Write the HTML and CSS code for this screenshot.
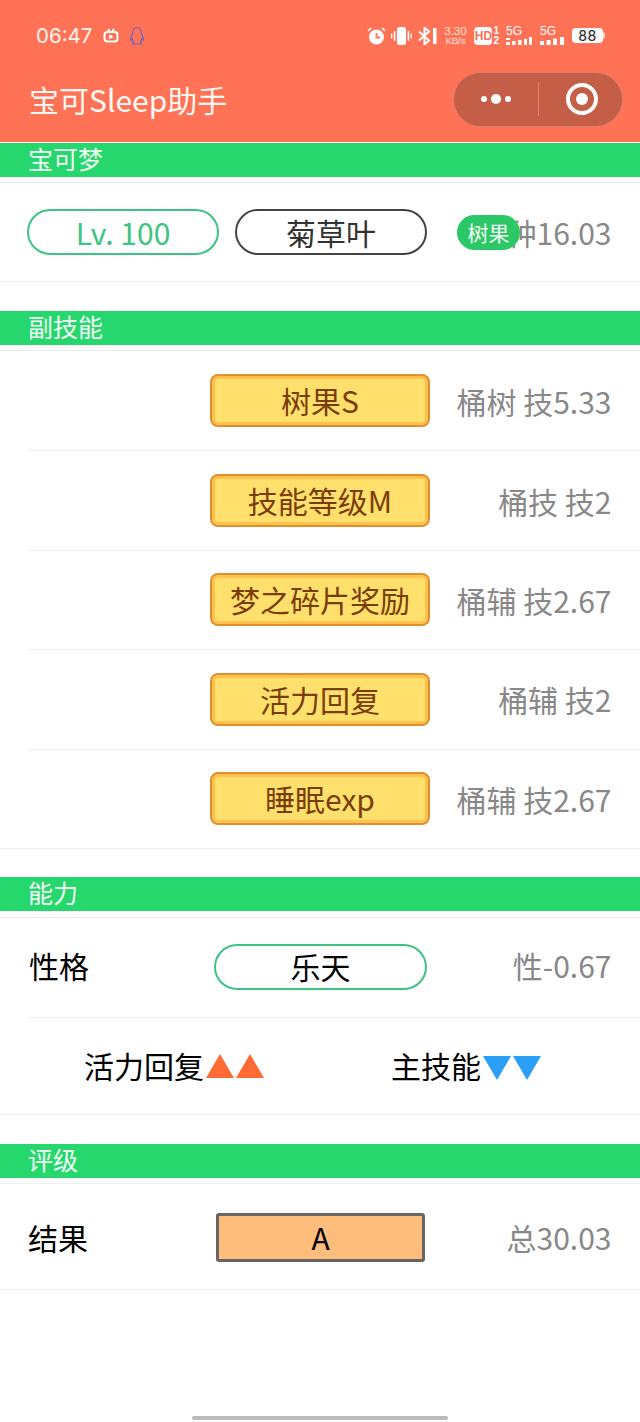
FILE: index.html
```html
<!DOCTYPE html>
<html lang="zh-CN">
<head>
  <meta charset="UTF-8">
  <title>宝可Sleep助手</title>
  <link rel="stylesheet" href="styles.css">
</head>
<body>
  <header class="topbar">
    <div class="status">
      <div class="status-left">
        <span class="time">06:47</span>
        <svg class="ic-tv" width="16" height="15" viewBox="0 0 16 15" fill="none" stroke="#fff" stroke-width="2"><path d="M5 1l2 3M11 1L9 4"/><rect x="1.5" y="4" width="13" height="9.5" rx="3"/><path d="M6.5 7v3.5l3.5-1.7z" fill="#fff" stroke-width="1"/></svg>
        <svg class="ic-qq" width="16" height="20" viewBox="0 0 17 20" fill="none" stroke="#5b63c9" stroke-width="1.1"><path d="M8.5 1C5.5 1 4 3.2 4 6c0 1.2-.3 1.800-.9 2.900C2 11 1.300 12.800 1.700 14.500c.8-.3 1.300-.9 1.600-1.500.3 1.300.9 2.400 1.800 3.200-1.300.5-1.900 1-1.700 1.800.3.800 2.800.9 5.100.1 2.300.8 4.800.7 5.100-.1.200-.8-.4-1.300-1.700-1.800.9-.8 1.500-1.900 1.800-3.200.3.600.8 1.200 1.600 1.500.4-1.700-.3-3.500-1.400-5.600C13.300 7.800 13 7.200 13 6c0-2.800-1.500-5-4.500-5z"/></svg>
      </div>
      <div class="status-right">
        <svg width="19" height="18" viewBox="0 0 19 18"><circle cx="9.500" cy="10" r="7.500" fill="#fff"/><path d="M9.500 6v4.500h3.500" fill="none" stroke="#ff7256" stroke-width="1.800"/><path d="M1 4l3-3M18 4l-3-3" stroke="#fff" stroke-width="1.600"/></svg>
        <svg class="ic-vib" width="21" height="18" viewBox="0 0 21 18" fill="#fff"><rect x="6" y="0" width="9" height="18" rx="2.500"/><rect x="2.800" y="4" width="1.600" height="10" rx=".8"/><rect x="0" y="6.500" width="1.400" height="5" rx=".7"/><rect x="16.600" y="4" width="1.600" height="10" rx=".8"/><rect x="19.600" y="6.500" width="1.400" height="5" rx=".7"/></svg>
        <svg class="ic-bt" width="19" height="18" viewBox="0 0 19 18" fill="none" stroke="#fff" stroke-width="2"><path d="M1 4.500l10 9-4.500 4V.5l4.500 4-10 9"/><rect x="15" y="1" width="3.500" height="16" fill="#fff" stroke="none"/></svg>
        <div class="speed"><span>3.30</span><span class="speed-unit">KB/s</span></div>
        <div class="hd"><span class="hd-box">HD</span><span class="hd-nums"><span>1</span><span>2</span></span></div>
        <div class="net net-a">
          <span class="net-label">5G</span>
          <svg width="26" height="8" viewBox="0 0 26 8" fill="#fff"><rect x="0" y="1" width="4" height="2"/><rect x="0" y="5" width="4" height="3"/><rect x="6" y="4" width="3.500" height="4"/><rect x="12" y="3" width="3.500" height="5"/><rect x="18" y="2" width="3" height="6"/><rect x="23" y="0" width="3" height="8"/></svg>
        </div>
        <div class="net net-b">
          <span class="net-label">5G</span>
          <svg width="26" height="8" viewBox="0 0 26 8" fill="#fff"><rect x="0" y="4" width="4" height="4"/><rect x="6.500" y="3" width="4" height="5"/><rect x="13" y="1.500" width="4" height="6.500"/><rect x="20" y="0" width="4" height="8"/></svg>
        </div>
        <div class="battery"><span class="battery-body">88</span><span class="battery-tip"></span></div>
      </div>
    </div>
    <div class="nav">
      <div class="nav-title">宝可Sleep助手</div>
      <div class="capsule">
        <div class="capsule-dots">
          <span class="dot"></span><span class="dot dot-big"></span><span class="dot"></span>
        </div>
        <span class="capsule-line"></span>
        <div class="capsule-target"><span></span></div>
      </div>
    </div>
  </header>

  <section class="section section-first">
    <h2 class="section-title">宝可梦</h2>
    <div class="cells">
      <div class="row row-pokemon">
        <div class="pill pill-green">Lv. 100</div>
        <div class="pill pill-dark">菊草叶</div>
        <div class="value value-tagged"><span class="tag">树果</span>种16.03</div>
      </div>
    </div>
  </section>

  <section class="section">
    <h2 class="section-title">副技能</h2>
    <div class="cells">
      <div class="row row-skill">
        <span></span><div class="skill">树果S</div><div class="value">桶树 技5.33</div>
      </div>
      <div class="row row-skill">
        <span></span><div class="skill">技能等级M</div><div class="value">桶技 技2</div>
      </div>
      <div class="row row-skill">
        <span></span><div class="skill">梦之碎片奖励</div><div class="value">桶辅 技2.67</div>
      </div>
      <div class="row row-skill">
        <span></span><div class="skill">活力回复</div><div class="value">桶辅 技2</div>
      </div>
      <div class="row row-skill">
        <span></span><div class="skill">睡眠exp</div><div class="value">桶辅 技2.67</div>
      </div>
    </div>
  </section>

  <section class="section section-tight">
    <h2 class="section-title">能力</h2>
    <div class="cells">
      <div class="row row-nature">
        <div class="label">性格</div>
        <div class="pill pill-nature">乐天</div>
        <div class="value">性-0.67</div>
      </div>
      <div class="row row-effects">
        <div class="effect">活力回复<i class="tri tri-up"></i><i class="tri tri-up"></i></div>
        <div class="effect">主技能<i class="tri tri-down"></i><i class="tri tri-down"></i></div>
      </div>
    </div>
  </section>

  <section class="section">
    <h2 class="section-title">评级</h2>
    <div class="cells">
      <div class="row row-result">
        <div class="label">结果</div>
        <div class="grade">A</div>
        <div class="value">总30.03</div>
      </div>
    </div>
  </section>

  <div class="home-bar"></div>
</body>
</html>
```

FILE: styles.css
```css
* {
  box-sizing: border-box;
}

html, body {
  margin: 0;
  height: 1422px;
  overflow: hidden;
}

body {
  position: relative;
  background: #fff;
  color: #000;
  font-family: "Noto Sans CJK SC", "Noto Sans", sans-serif;
  font-size: 30px;
}

/* top bar */
.topbar {
  height: 142px;
  background: #ff7256;
  color: #fff;
}

.status {
  height: 71px;
  padding: 0 35px 0 36px;
  display: flex;
  align-items: center;
  justify-content: space-between;
}

.status-left {
  display: flex;
  align-items: center;
}

.time {
  font-family: Inter, "Noto Sans", sans-serif;
  font-size: 20.500px;
  line-height: 26px;
  color: #fff5f0;
}

.ic-tv {
  margin-left: 11px;
}

.ic-qq {
  margin-left: 10px;
}

.status-right {
  display: flex;
  align-items: center;
}

.ic-vib {
  margin-left: 5px;
}

.ic-bt {
  margin-left: 6px;
}

.speed {
  margin-left: 7px;
  width: 22px;
  display: flex;
  flex-direction: column;
  align-items: center;
  font-family: "Liberation Sans", sans-serif;
  font-size: 11.500px;
  line-height: 10px;
  color: #ffe6dc;
}

.speed-unit {
  font-size: 9.500px;
}

.hd {
  margin-left: 8px;
  display: flex;
  align-items: center;
}

.hd-box {
  width: 18px;
  height: 18px;
  border-radius: 4px;
  background: #fff;
  color: #ff7256;
  font-family: "Liberation Sans", sans-serif;
  font-size: 12px;
  font-weight: 700;
  line-height: 18px;
  text-align: center;
}

.hd-nums {
  margin-left: 1px;
  display: flex;
  flex-direction: column;
  font-family: "Liberation Sans", sans-serif;
  font-size: 10px;
  font-weight: 700;
  line-height: 10px;
}

.net {
  display: flex;
  flex-direction: column;
  width: 27px;
}

.net-a {
  margin-left: 7px;
}

.net-b {
  margin-left: 7px;
}

.net-label {
  font-family: "Liberation Sans", sans-serif;
  font-size: 12px;
  line-height: 10px;
  margin-bottom: 1px;
}

.battery {
  margin-left: 5px;
  display: flex;
  align-items: center;
}

.battery-body {
  width: 31px;
  height: 15px;
  border-radius: 4px;
  background: #fff;
  color: #333;
  font-family: Inter, sans-serif;
  font-size: 14px;
  font-weight: 500;
  letter-spacing: .5px;
  line-height: 15px;
  text-align: center;
}

.battery-tip {
  width: 2px;
  height: 7px;
  border-radius: 0 2px 2px 0;
  background: #ffc9b8;
}

.nav {
  height: 71px;
  padding: 0 17px 15px 29px;
  display: flex;
  align-items: center;
  justify-content: space-between;
}

.nav-title {
  font-size: 30px;
  line-height: 40px;
  color: #fff8f4;
}

.capsule {
  width: 170px;
  height: 55px;
  border: 1px solid #d9826c;
  border-radius: 28px;
  background: #c55e46;
  display: flex;
  align-items: center;
}

.capsule-dots {
  width: 84px;
  display: flex;
  align-items: center;
  justify-content: center;
  gap: 4px;
}

.dot {
  width: 6px;
  height: 6px;
  border-radius: 50%;
  background: #fff;
}

.dot-big {
  width: 10px;
  height: 10px;
}

.capsule-line {
  width: 1px;
  height: 34px;
  background: #d9826c;
}

.capsule-target {
  flex: 1;
  padding-left: 3px;
  display: flex;
  justify-content: center;
}

.capsule-target span {
  width: 32px;
  height: 32px;
  border: 4px solid #fff;
  border-radius: 50%;
  display: flex;
  align-items: center;
  justify-content: center;
}

.capsule-target span::after {
  content: "";
  width: 12px;
  height: 12px;
  border-radius: 50%;
  background: #fff;
}

/* sections */
.section {
  margin-top: 29px;
}

.section-first {
  margin-top: 1px;
}

.section-tight {
  margin-top: 28px;
}

.section-title {
  margin: 0;
  height: 34px;
  padding-left: 28px;
  background: #26d76d;
  color: #f2fff6;
  font-size: 25px;
  font-weight: 400;
  line-height: 31px;
}

.cells {
  margin-top: 5px;
  border-top: 1px solid #eeeeee;
  border-bottom: 1px solid #eeeeee;
}

.section-tight .cells {
  margin-top: 6px;
}

.row {
  position: relative;
  height: 99px;
  margin-left: 28px;
  padding-right: 28px;
  display: grid;
  grid-template-columns: 1fr auto 1fr;
  align-items: center;
}

.row + .row {
  border-top: 1px solid #eeeeee;
}

.row-skill {
  height: 99.400px;
}

.row-pokemon {
  height: 98px;
  margin-left: 27px;
  display: flex;
  gap: 16px;
}

.row-nature,
.row-result {
  padding-left: 1px;
}

.row-nature .value {
  padding-bottom: 4px;
}

.row-result {
  height: 105px;
}

.row-result .value {
  padding-top: 2px;
}

.row-effects {
  height: 98px;
  margin-bottom: -1px;
  display: flex;
  padding-bottom: 2px;
}

.label {
  padding-bottom: 4px;
  line-height: 40px;
}

.row-result .label {
  margin-left: -1px;
  padding-bottom: 0;
  padding-top: 1px;
}

.value {
  margin-right: .5px;
  color: #888888;
  font-size: 30px;
  line-height: 40px;
  text-align: right;
  white-space: nowrap;
}

.value-tagged {
  flex: 1;
}

.tag {
  position: absolute;
  top: 32px;
  left: 430px;
  width: 63px;
  height: 35px;
  border-radius: 18px;
  background: #2cc766;
  color: #f2fff6;
  font-size: 21px;
  line-height: 35px;
  text-align: center;
}

.pill {
  height: 46px;
  border-radius: 23px;
  font-size: 30px;
  text-align: center;
}

.pill-green {
  width: 192px;
  border: 2px solid #3dc482;
  color: #3dc482;
  line-height: 42px;
}

.pill-dark {
  width: 192px;
  border: 2px solid #444444;
  color: #333333;
  line-height: 42px;
}

.pill-nature {
  width: 213px;
  border: 2px solid #3dc482;
  line-height: 40px;
}

.skill {
  width: 220px;
  height: 53px;
  border: 2px solid #e08f2c;
  border-radius: 8px;
  background: #ffe06c;
  box-shadow: inset 0 0 0 3px #ffc24e;
  color: #7a3d08;
  line-height: 48px;
  text-align: center;
}

.grade {
  width: 209px;
  height: 49px;
  margin-top: 2px;
  border: 3px solid #666666;
  border-radius: 3px;
  background: #ffbd7c;
  line-height: 42px;
  text-align: center;
}

.effect {
  flex: 1;
  display: flex;
  align-items: center;
  justify-content: center;
  line-height: 40px;
}

.tri {
  width: 0;
  height: 0;
  border-left: 14px solid transparent;
  border-right: 14px solid transparent;
  margin-left: 2px;
}

.tri-up {
  margin-top: 2px;
  border-bottom: 24px solid #ff6a35;
}

.tri-down {
  margin-top: 6px;
  border-top: 24px solid #2b9ff5;
}

.home-bar {
  position: absolute;
  left: 192px;
  bottom: 2px;
  width: 256px;
  height: 4px;
  border-radius: 2px;
  background: #bbbbbb;
}
```
